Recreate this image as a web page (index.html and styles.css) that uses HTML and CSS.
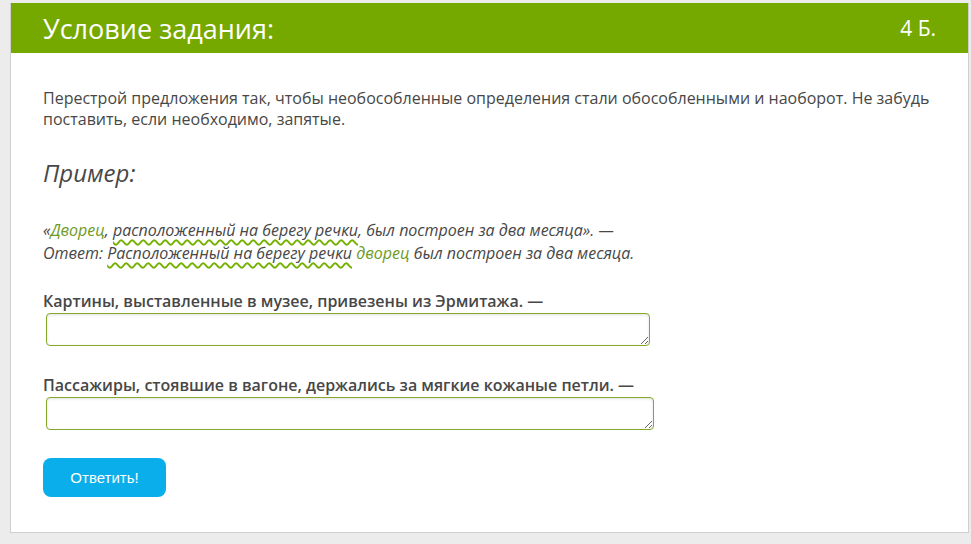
FILE: index.html
```html
<!DOCTYPE html>
<html lang="ru">
    <head>
        <meta charset="UTF-8" />
        <meta name="viewport" content="width=device-width, initial-scale=1.0" />
        <title>Условие задания</title>
        <link rel="stylesheet" href="styles.css">
    </head>
    <body>
        <div class="task">
            <div class="task-header">
                <h1>Условие задания:</h1>
                <span class="points">4 Б.</span>
            </div>
            <div class="task-body">
                <p class="intro">
                    Перестрой предложения так, чтобы необособленные определения стали обособленными и наоборот. Не забудь поставить, если необходимо, запятые.
                </p>

                <h2>Пример:</h2>

                <p class="example">
                    «<span class="word">Дворец</span>, <span class="wavy">расположенный на берегу речки</span>, был построен за два месяца». —<br />
                    Ответ: <span class="wavy">Расположенный на берегу речки</span> <span class="word">дворец</span> был построен за два месяца.
                </p>

                <form>
                    <div class="question">
                        <label for="answer1">Картины, выставленные в музее, привезены из Эрмитажа. —</label>
                        <textarea id="answer1" class="answer"></textarea>
                    </div>
                    <div class="question">
                        <label for="answer2">Пассажиры, стоявшие в вагоне, держались за мягкие кожаные петли. —</label>
                        <textarea id="answer2" class="answer answer-wide"></textarea>
                    </div>
                    <button type="button" class="submit">Ответить!</button>
                </form>
            </div>
        </div>
    </body>
</html>
```

FILE: styles.css
```css
body {
    margin: 0;
    padding: 3px 2px 12px 10px;
    background-color: #ececec;
    font-family: "Open Sans", "Noto Sans", sans-serif;
    color: #474747;
}
.task {
    background-color: #fff;
    border: 1px solid #cfcfcf;
    border-top: none;
}
.task-header {
    display: flex;
    justify-content: space-between;
    align-items: center;
    height: 50px;
    padding: 0 32px;
    background-color: #76a900;
    color: #fff;
}
.task-header h1 {
    margin: 0;
    font-size: 27px;
    font-weight: 400;
}
.points {
    font-size: 21px;
}
.task-body {
    padding: 35px 32px 35px;
}
.intro {
    margin: 0;
    font-size: 16px;
    line-height: 21px;
}
h2 {
    margin: 26px 0 30px;
    font-size: 24px;
    font-weight: 400;
    font-style: italic;
    line-height: 33px;
}
.example {
    margin: 0 0 25px;
    font-size: 16px;
    font-style: italic;
    line-height: 23px;
}
.word {
    color: #6e9a1f;
}
.wavy {
    text-decoration: underline wavy #74b000;
    text-decoration-thickness: 1.6px;
    text-decoration-skip-ink: none;
    text-underline-offset: 3px;
}
.question {
    margin-bottom: 28px;
}
.question label {
    display: block;
    font-size: 16px;
    font-weight: 600;
    line-height: 22px;
}
.answer {
    display: block;
    box-sizing: border-box;
    width: 604px;
    height: 33px;
    margin: 1px 0 0 3px;
    border: 1px solid #86a82a;
    border-radius: 4px;
    box-shadow: inset 0 1px 3px rgba(0, 0, 0, 0.12);
    font-family: inherit;
}
.answer-wide {
    width: 608px;
}
.submit {
    display: block;
    width: 123px;
    height: 39px;
    margin-top: 1px;
    border: none;
    border-radius: 8px;
    background-color: #0aaeea;
    color: #fff;
    font-family: "Liberation Sans", Arial, sans-serif;
    font-size: 15px;
}
```
